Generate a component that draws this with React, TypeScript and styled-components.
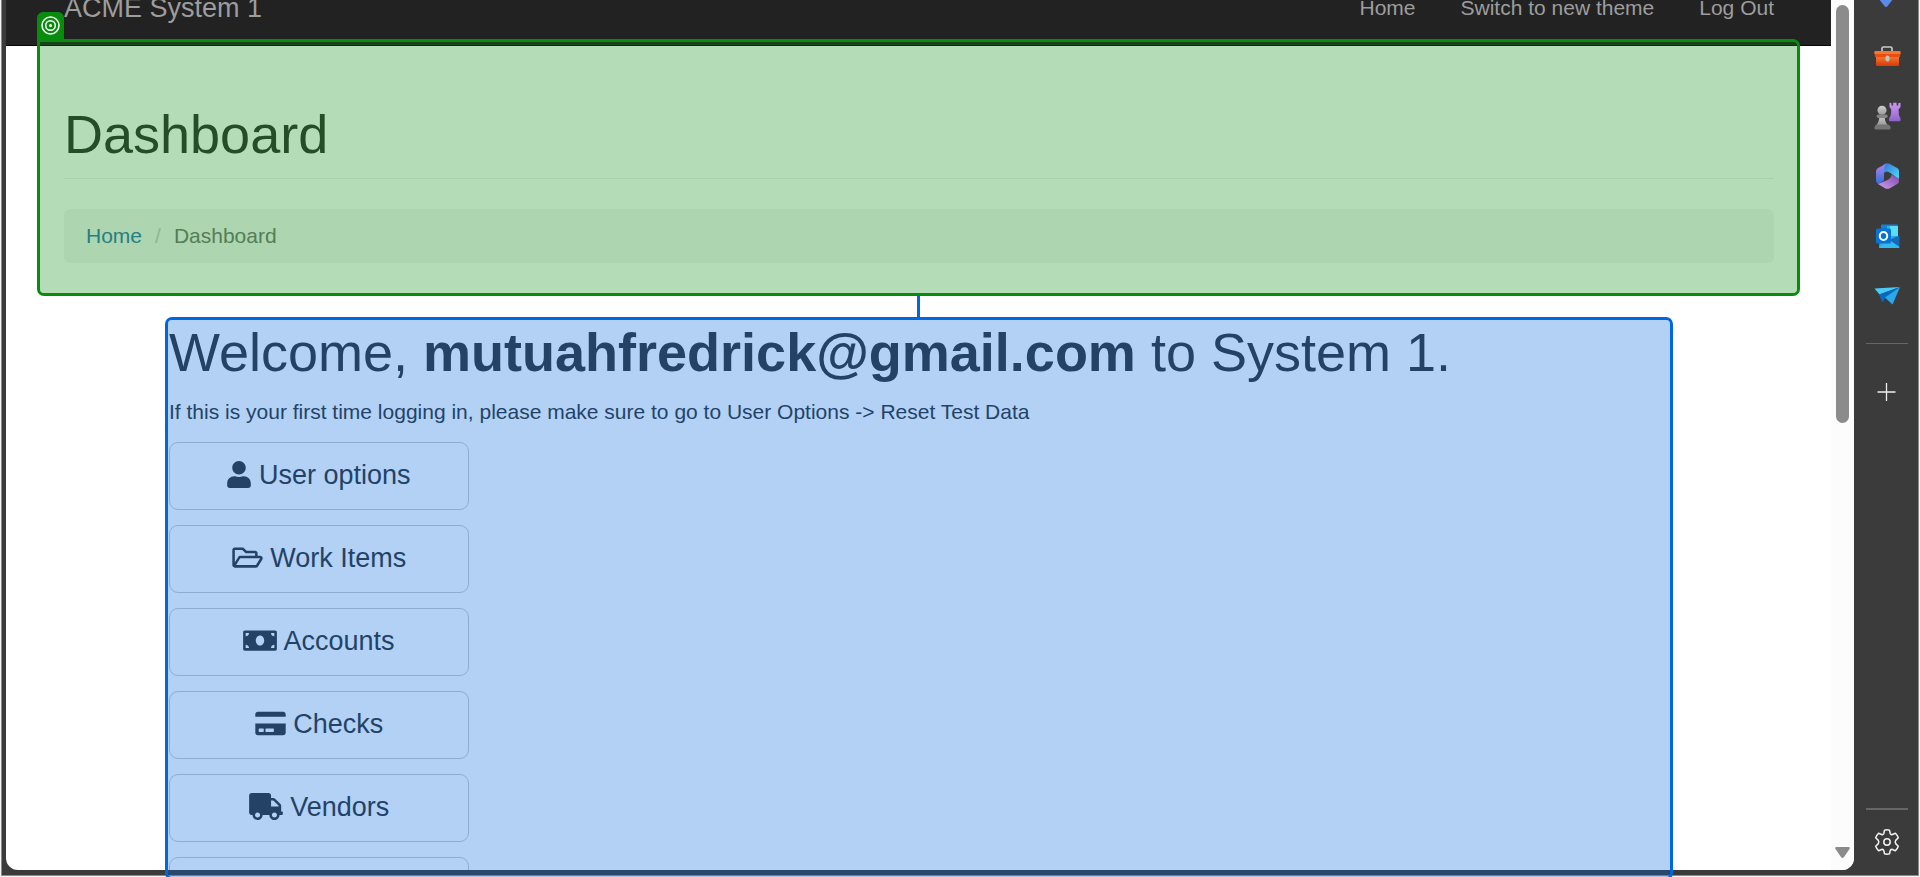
import React from "react";
import styled, { createGlobalStyle } from "styled-components";
import { FaUser, FaRegFolderOpen, FaMoneyBill, FaCreditCard, FaTruck, FaFileInvoice } from "react-icons/fa";

const GlobalStyle = createGlobalStyle`
  *, *::before, *::after { box-sizing: border-box; }
  body {
    margin: 0;
    overflow: hidden;
    background: #f4f4f4;
    color: #333;
    font-family: "Liberation Sans", Arial, sans-serif;
    font-size: 21px;
    line-height: 30px;
  }
`;

const Screen = styled.div`
  height: 100vh;
  padding: 0 1px 1px;
`;

const BrowserWindow = styled.div`
  display: flex;
  height: 100%;
  border: 1px solid #8b8b8b;
  border-top: 0;
  background: #3b3b3b;
`;

const Viewport = styled.div`
  display: flex;
  flex: 1;
  min-width: 0;
  margin: 0 0 5px 4px;
  border-radius: 0 0 12px 12px;
  background: #fff;
`;

const Page = styled.div`
  display: flex;
  flex: 1;
  flex-direction: column;
  min-width: 0;
`;

const Navbar = styled.nav`
  display: flex;
  flex: none;
  align-items: flex-end;
  justify-content: space-between;
  height: 46px;
  padding: 0 57px 22px 58px;
  border-bottom: 1px solid #080808;
  background: #222;
`;

const NavLink = styled.a`
  color: #9d9d9d;
  text-decoration: none;
  white-space: nowrap;
`;

const Brand = styled(NavLink)`
  font-size: 27px;
`;

const NavLinks = styled.div`
  display: flex;
  gap: 45px;
`;

const PageHeader = styled.header`
  position: relative;
  flex: none;
  margin: 0 57px 0 58px;
  padding-top: 59px;
`;

const Heading = styled.h1`
  margin: 0;
  font-size: 54px;
  font-weight: 400;
  line-height: 59px;
`;

const PageTitle = styled(Heading)`
  margin-bottom: 30px;
  padding-bottom: 14px;
  border-bottom: 1px solid #eee;
`;

const Breadcrumb = styled.ol`
  display: flex;
  margin: 0;
  padding: 12px 22px;
  border-radius: 6px;
  background: #f5f5f5;
  list-style: none;
`;

const Crumb = styled.li`
  color: #777;

  & + &::before {
    content: "/";
    margin: 0 13px;
    color: #ccc;
  }

  a {
    color: #337ab7;
    text-decoration: none;
  }
`;

const Highlight = styled.div`
  position: absolute;
  border: 3px solid;
  pointer-events: none;
`;

const AnchorHighlight = styled(Highlight)`
  inset: -7px -26px -33px -27px;
  z-index: 1;
  border-color: #078c0d;
  border-radius: 0 7px 7px 7px;
  background: rgba(7, 140, 13, 0.3);
  background-clip: padding-box;
`;

const AnchorTag = styled.div`
  position: absolute;
  left: -3px;
  bottom: 100%;
  display: flex;
  align-items: center;
  justify-content: center;
  width: 27px;
  height: 30px;
  padding-bottom: 3px;
  border-radius: 6px 6px 0 0;
  background: #078c0d;
`;

const TargetHighlight = styled(Highlight)`
  inset: 0 0 -10px;
  border-color: #0068df;
  border-radius: 7px;
  background: rgba(0, 104, 223, 0.3);
  background-clip: padding-box;
`;

const Connector = styled.div`
  position: absolute;
  left: 50%;
  bottom: 100%;
  width: 3px;
  height: 21px;
  margin-left: -2px;
  background: #0068df;
`;

const Main = styled.main`
  position: relative;
  display: flex;
  flex: 1;
  flex-direction: column;
  min-height: 0;
  margin: 54px 158px 0 159px;
  padding: 6px 4px 0;
`;

const Intro = styled.p`
  margin: 15px 0;
`;

const Menu = styled.div`
  display: flex;
  flex: 1;
  flex-direction: column;
  align-items: flex-start;
  gap: 15px;
  min-height: 0;
  overflow: hidden;
`;

const MenuButton = styled.button<{ $iconWidth: number }>`
  flex: none;
  width: 300px;
  height: 68px;
  padding: 0 0 3px;
  border: 1px solid #ccc;
  border-radius: 9px;
  background: transparent;
  color: #333;
  font-family: inherit;
  font-size: 27px;
  line-height: 36px;

  svg {
    width: ${(p) => p.$iconWidth}px;
    height: 27px;
    vertical-align: -4px;
  }
`;

const ScrollTrack = styled.div`
  display: flex;
  flex: none;
  flex-direction: column;
  align-items: center;
  justify-content: space-between;
  width: 23px;
  padding: 5px 0 12px;
  border-radius: 0 0 12px 0;
  background: #fcfcfc;
`;

const ScrollThumb = styled.div`
  width: 13px;
  height: 49%;
  border-radius: 7px;
  background: #8b8b8b;
`;

const Sidebar = styled.aside`
  display: flex;
  flex: none;
  flex-direction: column;
  align-items: center;
  width: 64px;
  padding: 0 0 3px 2px;
  background: #3b3b3b;
`;

const AppList = styled.div`
  display: flex;
  flex-direction: column;
  margin-top: -34px;
`;

const AppButton = styled.button`
  display: flex;
  flex: none;
  align-items: center;
  justify-content: center;
  width: 60px;
  height: 60px;
  padding: 0;
  border: 0;
  background: transparent;
`;

const Divider = styled.hr<{ $thick?: boolean }>`
  width: 42px;
  height: ${(p) => (p.$thick ? 2 : 1)}px;
  margin: ${(p) => (p.$thick ? "auto 0 2px" : "17px 0 18px")};
  border: 0;
  background: #666;
`;

const Target = () => (
  <svg width="19" height="19" viewBox="0 0 19 19" fill="none" stroke="#fff" strokeWidth="1.5">
    <circle cx="9.5" cy="9.5" r="8.5" />
    <circle cx="9.5" cy="9.5" r="4.8" />
    <circle cx="9.5" cy="9.5" r="1.5" fill="#fff" stroke="none" />
  </svg>
);

const Tag = () => (
  <svg width="28" height="28" viewBox="0 0 28 28">
    <path d="M3 13 13 3l10 10-8.500 11.300q-1.500 1.500-3 0z" fill="#5b8bea" />
  </svg>
);

const Toolbox = () => (
  <svg width="28" height="28" viewBox="0 0 28 28">
    <defs>
      <linearGradient id="box" x1="0" y1="0" x2="0" y2="1">
        <stop offset="0" stopColor="#fb7a35" />
        <stop offset="1" stopColor="#d43a06" />
      </linearGradient>
    </defs>
    <path d="M9 10V6.500q0-1.500 1.500-1.500h7Q19 5 19 6.500V10" fill="none" stroke="#c9c9c9" strokeWidth="1.700" />
    <path d="M3 14h23v8.500q0 1.500-1.500 1.500h-20Q3 24 3 22.500z" fill="url(#box)" />
    <path d="M2.500 9h24q1 0 1 1l-.5 5H2l-.5-5q0-1 1-1z" fill="#e5500f" />
    <path d="M2.500 9h24q1 0 1 1v2h-26v-2q0-1 1-1z" fill="#fa7630" />
    <rect x="12.500" y="13.500" width="4" height="6" rx="1.900" fill="#c6c1be" />
  </svg>
);

const Chess = () => (
  <svg width="28" height="28" viewBox="0 0 28 28">
    <defs>
      <linearGradient id="rook" x1="0" y1="0" x2="0" y2="1">
        <stop offset="0" stopColor="#cf97f8" />
        <stop offset="1" stopColor="#8f63c9" />
      </linearGradient>
      <linearGradient id="pawn" x1="0" y1="0" x2="0" y2="1">
        <stop offset="0" stopColor="#cdcdcd" />
        <stop offset="1" stopColor="#9c9c9c" />
      </linearGradient>
    </defs>
    <path d="M16.500 .8l2 .4V3.500h1.700V.8h3.400v2.700h1.700V1.200l2.200-.4V5l-2 2.500q-.2 5.500 2 9v1.700q0 1-1 1H17q-1 0-1-1v-1.700q2.500-3.500 2.200-9L16.500 5z" fill="url(#rook)" />
    <circle cx="9" cy="8.200" r="4.500" fill="url(#pawn)" />
    <path d="M6.500 13h5q0 6 3 10h-11q3-4 3-10z" fill="url(#pawn)" />
    <rect x="3.700" y="12.500" width="11" height="3.500" rx="1.700" fill="#858585" />
    <path d="M4 22.500h11q2.500.5 2.500 3v1q0 1-1 1h-14q-1 0-1-1v-1q0-2.500 2.500-3z" fill="#757575" />
  </svg>
);

const Office = () => (
  <svg width="28" height="28" viewBox="0 0 28 28">
    <defs>
      <linearGradient id="officeTop" x1="0" y1="0" x2="1" y2="1">
        <stop offset="0" stopColor="#366fd8" />
        <stop offset="1" stopColor="#4be0fa" />
      </linearGradient>
      <linearGradient id="officeLeft" x1="0" y1="0" x2="0" y2="1">
        <stop offset="0" stopColor="#b681e4" />
        <stop offset="1" stopColor="#2f6fe0" />
      </linearGradient>
      <linearGradient id="officeBottom" x1="0" y1="1" x2="1" y2="0">
        <stop offset="0" stopColor="#d69bf4" />
        <stop offset="1" stopColor="#754aa5" />
      </linearGradient>
    </defs>
    <path d="M10 3Q13 .2 16.500 1.800l8 4.500Q26 7.500 26 9v8.500l-8.500-6.500-3-1.500q-3 0-4.500 3.300z" fill="url(#officeTop)" />
    <path d="M13 2Q11 4.500 11 8v10.500L5.500 22Q3 21 3 18.500V9.500Q3 7 5 6z" fill="url(#officeLeft)" />
    <path d="M26 16.500V19q0 2-1.500 2.800l-7.500 4.400q-2.500 1.300-5 0L5 22l9.500-4q3.500-1.500 4-5.500z" fill="url(#officeBottom)" />
  </svg>
);

const Outlook = () => (
  <svg width="28" height="28" viewBox="0 0 28 28">
    <rect x="8" y="2.500" width="17" height="15" rx="1" fill="#1483d7" />
    <path d="M14 4h11v11H14z" fill="#2fb2f0" />
    <path d="M17 4h7q1 0 1 1v9h-8z" fill="#5bdcfb" />
    <path d="M7 14h19v11q0 1-1 1H7q-1 0-1-1z" fill="#29a8ea" />
    <path d="M26.500 13.500V25L16 18z" fill="#1569b5" />
    <path d="M6 25l11-6.500 9.500 6.500q0 1-1 1H7q-1 0-1-1z" fill="#32b9f1" />
    <rect x="3" y="6.500" width="15" height="15" rx="1.500" fill="#0674d4" />
    <ellipse cx="10.500" cy="14" rx="3.700" ry="4" fill="none" stroke="#fff" strokeWidth="2" />
  </svg>
);

const Plane = () => (
  <svg width="28" height="28" viewBox="0 0 28 28">
    <path d="M1.500 6.500 27 5 6.500 12.500z" fill="#49cdf8" />
    <path d="M6 12.500 27 5 12 16.500 9.300 20.500z" fill="#0869bb" />
    <path d="M12 15.500 27 5l-7.500 17.500z" fill="#29a9ec" />
  </svg>
);

const Plus = () => (
  <svg width="20" height="20" viewBox="0 0 20 20" stroke="#eee" strokeWidth="1.300">
    <path d="M9.500 1v18M.5 10h18" />
  </svg>
);

const Gear = () => (
  <svg width="28" height="28" viewBox="0 0 28 28" fill="none" stroke="#f2f2f2" strokeWidth="1.500" strokeLinejoin="round">
    <path d="M11.500 2.200q2.500-.7 5 0l.7 3.300q.6 1.500 2.200 1l3-1.200q2.100 2 2.900 4.500l-2.600 2.600q-1 1.600 0 3.200l2.600 2.600q-.8 2.500-2.900 4.500l-3-1.200q-1.600-.5-2.200 1l-.7 3.300q-2.500.7-5 0l-.7-3.300q-.6-1.500-2.200-1l-3 1.200q-2.100-2-2.900-4.500l2.600-2.600q1-1.600 0-3.200L2.700 9.800q.8-2.500 2.900-4.500l3 1.200q1.600.5 2.200-1z" />
    <circle cx="14" cy="14" r="3.200" />
  </svg>
);

const menu = [
  { label: "User options", Icon: FaUser, iconWidth: 24 },
  { label: "Work Items", Icon: FaRegFolderOpen, iconWidth: 31 },
  { label: "Accounts", Icon: FaMoneyBill, iconWidth: 34 },
  { label: "Checks", Icon: FaCreditCard, iconWidth: 31 },
  { label: "Vendors", Icon: FaTruck, iconWidth: 34 },
];

const apps = [
  { name: "Shopping", Icon: Tag },
  { name: "Tools", Icon: Toolbox },
  { name: "Games", Icon: Chess },
  { name: "Microsoft 365", Icon: Office },
  { name: "Outlook", Icon: Outlook },
  { name: "Drop", Icon: Plane },
];

export default function App() {
  return (
    <Screen>
      <GlobalStyle />
      <BrowserWindow>
        <Viewport>
          <Page>
            <Navbar>
              <Brand href="#">ACME System 1</Brand>
              <NavLinks>
                <NavLink href="#">Home</NavLink>
                <NavLink href="#">Switch to new theme</NavLink>
                <NavLink href="#">Log Out</NavLink>
              </NavLinks>
            </Navbar>
            <PageHeader>
              <PageTitle>Dashboard</PageTitle>
              <Breadcrumb>
                <Crumb><a href="#">Home</a></Crumb>
                <Crumb>Dashboard</Crumb>
              </Breadcrumb>
              <AnchorHighlight>
                <AnchorTag><Target /></AnchorTag>
              </AnchorHighlight>
            </PageHeader>
            <Main>
              <Heading>
                Welcome, <b>mutuahfredrick@gmail.com</b> to System 1.
              </Heading>
              <Intro>
                If this is your first time logging in, please make sure to go to User Options -&gt; Reset Test Data
              </Intro>
              <Menu>
                {menu.map(({ label, Icon, iconWidth }) => (
                  <MenuButton key={label} type="button" $iconWidth={iconWidth}>
                    <Icon /> {label}
                  </MenuButton>
                ))}
                <MenuButton type="button" aria-label="Invoices" $iconWidth={21}>
                  <FaFileInvoice />
                </MenuButton>
              </Menu>
              <TargetHighlight />
              <Connector />
            </Main>
          </Page>
          <ScrollTrack>
            <ScrollThumb />
            <svg width="15" height="11" viewBox="0 0 15 11">
              <path d="M1.500 0h12q2 .3 1 2L9 10q-1.500 1.800-3 0L.5 2q-1-1.700 1-2z" fill="#8b8b8b" />
            </svg>
          </ScrollTrack>
        </Viewport>
        <Sidebar>
          <AppList>
            {apps.map(({ name, Icon }) => (
              <AppButton key={name} type="button" aria-label={name}>
                <Icon />
              </AppButton>
            ))}
          </AppList>
          <Divider />
          <AppButton type="button" aria-label="Add"><Plus /></AppButton>
          <Divider $thick />
          <AppButton type="button" aria-label="Settings"><Gear /></AppButton>
        </Sidebar>
      </BrowserWindow>
    </Screen>
  );
}
